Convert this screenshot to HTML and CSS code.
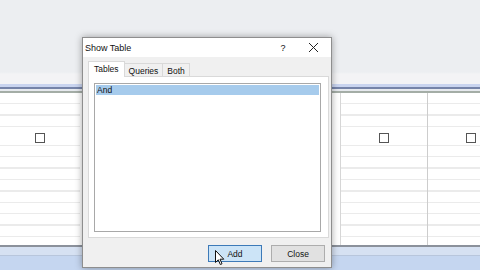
FILE: index.html
```html
<!DOCTYPE html>
<html>
<head>
  <meta charset="utf-8">
  <title>Show Table</title>
  <link rel="stylesheet" href="styles.css">
</head>
<body>

  <!-- query design background -->
  <div class="desk">
    <div class="top-pane"></div>
    <div class="splitter">
      <div class="s1"></div><div class="s2"></div><div class="s3"></div><div class="s4"></div>
    </div>
    <div class="grid">
      <div class="col c1">
        <div class="lines"></div>
        <div class="check-row"><span class="chk"></span></div>
        <div class="lines"></div>
      </div>
      <div class="col c2"></div>
      <div class="col c3">
        <div class="lines"></div>
        <div class="check-row"><span class="chk"></span></div>
        <div class="lines"></div>
      </div>
      <div class="col c4">
        <div class="lines"></div>
        <div class="check-row"><span class="chk"></span></div>
        <div class="lines"></div>
      </div>
    </div>
    <div class="bottom-bar">
      <div class="b1"></div><div class="b2"></div>
    </div>
  </div>

  <!-- dialog -->
  <div class="dialog">
    <div class="titlebar">
      <span class="title">Show Table</span>
      <span class="help">?</span>
      <span class="close-x">
        <svg width="11" height="11" viewBox="0 0 11 11"><path d="M1 1 L10 10 M10 1 L1 10" stroke="#222" stroke-width="1"/></svg>
      </span>
    </div>
    <div class="dlg-body">
      <div class="tabs">
        <span class="tab active">Tables</span>
        <span class="tab">Queries</span>
        <span class="tab">Both</span>
      </div>
      <div class="panel">
        <div class="listbox">
          <div class="item selected">And</div>
        </div>
      </div>
      <div class="buttons">
        <button class="btn btn-add">Add</button>
        <button class="btn">Close</button>
      </div>
    </div>
    <svg class="cursor" width="10" height="16" viewBox="0 0 10 16">
      <path d="M0.5 0.5 L0.5 12.5 L3.3 9.8 L5.3 14.5 L7 13.8 L5 9.2 L8.8 9.2 Z" fill="#fff" stroke="#111" stroke-width="1" stroke-linejoin="round"/>
    </svg>
  </div>

</body>
</html>
```

FILE: styles.css
```css
* { box-sizing: border-box; }
html, body {
  margin: 0;
  width: 480px;
  height: 270px;
  overflow: hidden;
  font-family: "Liberation Sans", Arial, sans-serif;
  background-color: #eeeff2;
}

/* background window */
.desk {
  display: flex;
  flex-direction: column;
  height: 270px;
}
.top-pane {
  height: 84px;
  background: linear-gradient(#eceef1 0, #eceef1 72px, #f3f3f5 74px, #f3f3f5 84px);
}
.splitter div { height: 2px; }
.splitter .s1 { background-color: #c9d4ef; height: 3px; }
.splitter .s2 { background-color: #7583a8; height: 2px; }
.splitter .s3 { background-color: #e6e9ee; height: 2px; }
.splitter .s4 { background-color: #a4ada6; height: 2px; }

.grid {
  display: grid;
  grid-template-columns: 80px 260px 87px 53px;
  height: 152px;
  background-color: #fff;
}
.col {
  display: flex;
  flex-direction: column;
}
.c3 { border-left: 1px solid #d6d6d6; }
.c4 { border-left: 1px solid #cdcdcd; }
.lines {
  flex: 1;
  background: repeating-linear-gradient(#fff 0, #fff 10px, #ebebeb 10px, #ebebeb 11.4px);
}
.col .lines:first-child { flex: 0 0 38px; }
.check-row {
  height: 15px;
  display: flex;
  justify-content: center;
  align-items: center;
  border-bottom: 1px solid #ebebeb;
}
.chk {
  width: 10px;
  height: 10px;
  border: 1px solid #555;
  background-color: #fff;
}
.c4 .check-row { justify-content: flex-start; padding-left: 38px; }

.bottom-bar {
  flex: 1;
  display: flex;
  flex-direction: column;
  border-top: 2px solid #8b919b;
}
.bottom-bar .b1 { height: 9px; background-color: #d6e1f2; border-bottom: 1px solid #b8c6dc; }
.bottom-bar .b2 { flex: 1; background-color: #c5d6f0; }

/* dialog */
.dialog {
  position: absolute;
  left: 82px;
  top: 37px;
  width: 250px;
  height: 231px;
  background-color: #f0f0f0;
  border: 1px solid #8e8e8e;
  box-shadow: 0 0 7px rgba(0, 0, 0, 0.35);
  display: flex;
  flex-direction: column;
}
.titlebar {
  height: 19px;
  background-color: #fff;
  display: flex;
  align-items: center;
  padding-left: 2px;
  font-size: 9px;
  color: #111;
}
.title { flex: 1; }
.help { width: 12px; text-align: center; margin-right: 19px; font-size: 9px; }
.close-x { display: flex; margin-right: 12px; }

.dlg-body {
  flex: 1;
  display: flex;
  flex-direction: column;
  padding: 4px 2px 0 5px;
}
.tabs {
  display: flex;
  align-items: flex-end;
  height: 16px;
  font-size: 8.5px;
  color: #111;
}
.tab {
  height: 14px;
  padding: 2px 4px 0 4px;
  border: 1px solid #d9d9d9;
  border-bottom: none;
  margin-left: -1px;
}
.tab:first-child { margin-left: 0; }
.tab.active {
  height: 16px;
  background-color: #fff;
  padding: 2px 5px 0 5px;
  position: relative;
  z-index: 1;
}
.panel {
  height: 162px;
  width: 241px;
  background-color: #fff;
  border: 1px solid #d9d9d9;
  margin-top: -1px;
  padding: 6px 7px 5px 5px;
}
.listbox {
  height: 100%;
  border: 1px solid #a8a8a8;
  padding: 1px;
}
.item {
  height: 10px;
  font-size: 8.5px;
  line-height: 10px;
  padding-left: 1px;
  color: #111;
}
.item.selected { background-color: #a6cbec; }

.buttons {
  display: flex;
  justify-content: flex-end;
  gap: 9px;
  padding: 7px 4px 0 0;
}
.btn {
  width: 54px;
  height: 17px;
  font-family: "Liberation Sans", Arial, sans-serif;
  font-size: 8.5px;
  color: #111;
  background-color: #e1e1e1;
  border: 1px solid #adadad;
  padding: 0;
}
.btn-add {
  background-color: #cce4f7;
  border-color: #3d7ab8;
}
.cursor {
  position: absolute;
  left: 132px;
  top: 212px;
}
```
